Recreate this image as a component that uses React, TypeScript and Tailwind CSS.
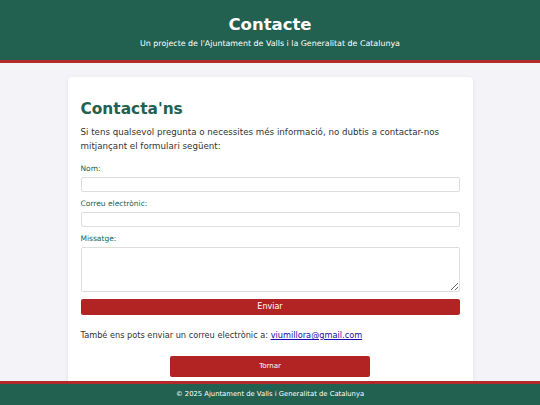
import React from "react";

export default function App() {
  return (
    <div className="min-h-screen bg-[#f4f3f8] font-['DejaVu_Sans',sans-serif] text-[#333]">
      {/* header */}
      <header className="bg-[#226150] border-b-[3px] border-[#b22a2a] text-white text-center pt-[14px] pb-[10px]">
        <h1 className="text-[16.5px] font-bold leading-[22px]">Contacte</h1>
        <p className="text-[7.9px] leading-[12px] mt-[2px]">
          Un projecte de l'Ajuntament de Valls i la Generalitat de Catalunya
        </p>
      </header>
      {/* card */}
      <main className="pt-[14px] pb-[40px]">
        <div className="mx-auto w-[405px] bg-white rounded-[4px] shadow-[0_1px_4px_rgba(0,0,0,0.08)] px-[13px] pt-[22px] pb-[20px]">
          <h2 className="text-[15.4px] font-bold text-[#226150] leading-[20px]">Contacta'ns</h2>
          <p className="text-[8.7px] leading-[14px] mt-[6px]">
            Si tens qualsevol pregunta o necessites més informació, no dubtis a contactar-nos mitjançant el formulari següent:
          </p>
          <form className="mt-[11px] flex flex-col">
            <label className="text-[7.5px] text-[#226150] leading-[10px]">Nom:</label>
            <input className="mt-[3px] h-[15px] border border-[#ddd] rounded-[2px]" />
            <label className="mt-[7px] text-[7.5px] text-[#226150] leading-[10px]">Correu electrònic:</label>
            <input className="mt-[3px] h-[15px] border border-[#ddd] rounded-[2px]" />
            <label className="mt-[7px] text-[7.5px] text-[#226150] leading-[10px]">Missatge:</label>
            <textarea className="mt-[3px] h-[45px] border border-[#ddd] rounded-[2px]" />
            <button
              type="button"
              className="mt-[7px] h-[16px] bg-[#b22424] text-white text-[8px] rounded-[2px]"
            >
              Enviar
            </button>
          </form>
          <p className="text-[8.2px] mt-[13px] leading-[14px]">
            També ens pots enviar un correu electrònic a:{" "}
            <a href="#" className="text-[#1a0dab] underline">viumillora@gmail.com</a>
          </p>
          <div className="flex justify-center mt-[14px]">
            <button type="button" className="w-[200px] h-[21px] bg-[#b22424] text-white text-[7px] rounded-[2px]">
              Tornar
            </button>
          </div>
        </div>
      </main>
      {/* footer */}
      <footer className="fixed bottom-0 left-0 right-0 bg-[#226150] border-t-[3px] border-[#b22a2a] text-white text-center text-[6.8px] h-[24px] leading-[21px]">
        © 2025 Ajuntament de Valls i Generalitat de Catalunya
      </footer>
    </div>
  );
}
